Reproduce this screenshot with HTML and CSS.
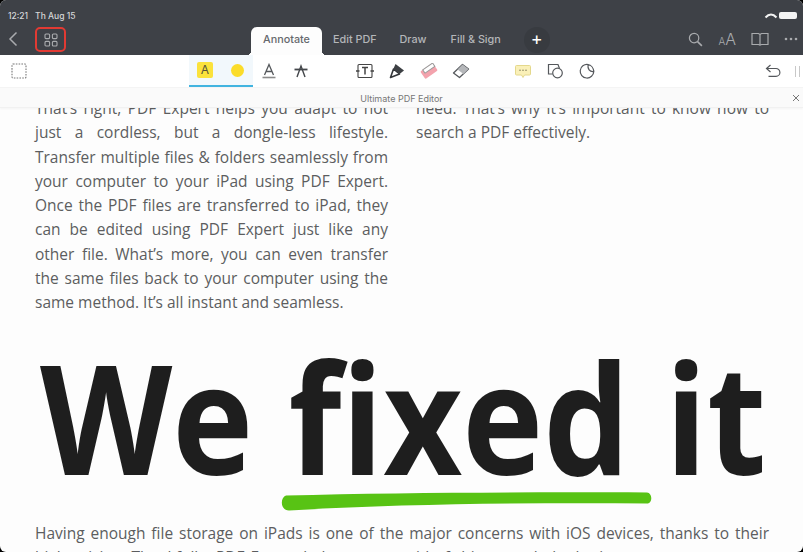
FILE: index.html
```html
<!DOCTYPE html>
<html lang="en">
<head>
  <meta charset="UTF-8" />
  <meta name="viewport" content="width=device-width, initial-scale=1.0" />
  <title>Ultimate PDF Editor</title>
  <link rel="stylesheet" href="styles.css">
</head>
<body>
  <div class="app">
    <header class="topbar">
      <div class="status">
        <span class="time">12:21</span>
        <span class="date">Th Aug 15</span>
        <svg class="wifi" width="14" height="8" viewBox="0 0 14 8"><path d="M1.5 5.5C5 1.6 9 1.6 12.5 5.5" fill="none" stroke="#f2f2f2" stroke-width="2"/></svg>
        <span class="battery"></span>
      </div>
      <nav class="nav">
        <svg class="back" width="10" height="16" viewBox="0 0 10 16"><path d="M8.5 1.5 2 8l6.5 6.5" fill="none" stroke="#a9abae" stroke-width="1.5"/></svg>
        <span class="docs-btn">
          <svg width="14" height="14" viewBox="0 0 14 14" fill="none" stroke="#a9abae" stroke-width="1.1"><rect x="1" y="1" width="4.6" height="4.6" rx="1"/><rect x="8.4" y="1" width="4.6" height="4.6" rx="1"/><rect x="1" y="8.4" width="4.6" height="4.6" rx="1"/><rect x="8.4" y="8.4" width="4.6" height="4.6" rx="1"/></svg>
        </span>
        <div class="tabs">
          <span class="tab active">Annotate</span>
          <span class="tab edit">Edit PDF</span>
          <span class="tab draw">Draw</span>
          <span class="tab fill">Fill &amp; Sign</span>
        </div>
        <span class="plus">+</span>
        <div class="nav-right">
          <svg width="15" height="15" viewBox="0 0 16 16" fill="none" stroke="#a9abae" stroke-width="1.3"><circle cx="6.500" cy="6.500" r="5"/><path d="m10.200 10.200 4.600 4.600" stroke-width="1.700"/></svg>
          <span class="font-size"><small>A</small>A</span>
          <svg width="18" height="14" viewBox="0 0 18 14" fill="none" stroke="#a9abae" stroke-width="1.200"><path d="M1 1.500h6.500L9 2.500l1.500-1H17v11h-6.500L9 13.200l-1.500-.7H1zM9 2.500v10.700"/></svg>
          <svg width="14" height="4" viewBox="0 0 14 4" fill="#a9abae"><circle cx="2" cy="2" r="1.300"/><circle cx="7" cy="2" r="1.300"/><circle cx="12" cy="2" r="1.300"/></svg>
        </div>
      </nav>
    </header>

    <div class="toolbar">
      <span class="tool select">
        <svg width="16" height="16" viewBox="0 0 16 16"><rect x="1" y="1" width="14" height="14" rx="1" fill="none" stroke="#777" stroke-width="1.100" stroke-dasharray="1.600 1.200"/></svg>
      </span>
      <div class="tool-group highlight">
        <span class="tool"><span class="marker-a">A</span></span>
        <span class="tool"><span class="dot"></span></span>
      </div>
      <div class="tool-group">
        <span class="tool">
          <svg width="16" height="16" viewBox="0 0 16 16" fill="none" stroke="#55585c" stroke-width="1.300"><path d="M3.500 12 8 1.500 12.500 12M5.200 8.500h5.600"/><path d="M1.500 14.500h13" stroke-width="1.600" stroke="#8a8a8a"/></svg>
        </span>
        <span class="tool">
          <svg width="16" height="14" viewBox="0 0 16 14" fill="none" stroke="#44474b" stroke-width="1.400"><path d="M4 13 8 2l4 11"/><path d="M1.500 5.500h13" stroke-width="1.800"/></svg>
        </span>
      </div>
      <div class="tool-group tools-mid">
        <span class="tool">
          <svg width="18" height="16" viewBox="0 0 18 16" fill="none" stroke="#444" stroke-width="1.100"><path d="M3 1.500h12a1 1 0 0 1 1 1v11a1 1 0 0 1-1 1H3a1 1 0 0 1-1-1v-11a1 1 0 0 1 1-1z"/><path d="M6 4.500h6M9 4.500v7" stroke-width="1.500"/><path d="M0 8h3.500M14.500 8H18" stroke-width="1.300"/></svg>
        </span>
        <span class="tool">
          <svg width="16" height="16" viewBox="0 0 16 16"><path d="M1.500 14.500 4.500 6 10.500 11z" fill="#fff" stroke="#33363a" stroke-width="1.600" stroke-linejoin="round"/><path d="M4.500 5.500 6.500 1 15 7.500 10.500 11z" fill="#3d4044"/></svg>
        </span>
        <span class="tool">
          <svg width="18" height="16" viewBox="0 0 18 16"><g transform="rotate(-35 9 8)"><rect x="1.500" y="3.500" width="15" height="9" rx="1" fill="#f3a3ad"/><rect x="4.500" y="3.500" width="12" height="4" fill="#fff" stroke="#9a9a9a"/></g></svg>
        </span>
        <span class="tool">
          <svg width="18" height="16" viewBox="0 0 18 16"><path d="M1.500 10 10.500 1.500l6 4.500-9 8.500z" fill="#fff" stroke="#55585c" stroke-width="1.300" stroke-linejoin="round"/><path d="M5.500 6.500 10.500 1.500l6 4.500-5 5z" fill="#b5b7ba"/></svg>
        </span>
      </div>
      <div class="tool-group tools-note">
        <span class="tool">
          <svg width="16" height="13" viewBox="0 0 16 13"><path d="M1.500 .5h13a1 1 0 0 1 1 1v7.500a1 1 0 0 1-1 1H9.500L8 12.500 6.500 10h-5a1 1 0 0 1-1-1V1.500a1 1 0 0 1 1-1z" fill="#faf0b8" stroke="#e4d88c"/><g fill="#8a8460"><circle cx="5" cy="5.200" r=".8"/><circle cx="8" cy="5.200" r=".8"/><circle cx="11" cy="5.200" r=".8"/></g></svg>
        </span>
        <span class="tool">
          <svg width="17" height="16" viewBox="0 0 17 16" fill="none" stroke="#55585c" stroke-width="1.200"><path d="M5.500 11H1.500V1.500H11l1.500 4"/><circle cx="10.500" cy="10" r="4.800" fill="#fff"/></svg>
        </span>
        <span class="tool">
          <svg width="16" height="16" viewBox="0 0 16 16" fill="none" stroke="#55585c" stroke-width="1.200"><path d="M9 1.500A6.800 6.800 0 1 0 14.800 8.500C10.500 9 8.500 6 9 1.500zM9 1.500c3 .5 5.500 3.500 5.800 7"/></svg>
        </span>
      </div>
      <div class="tool-right">
        <svg width="16" height="14" viewBox="0 0 16 14" fill="none" stroke="#55585c" stroke-width="1.200"><path d="M5.500 1 1.500 4.500 5.500 8"/><path d="M1.500 4.500h9.500a3.600 3.600 0 0 1 0 7.800H3.500"/></svg>
        <span class="handle"></span>
      </div>
    </div>

    <div class="titlebar">
      <span>Ultimate PDF Editor</span>
      <svg class="close" width="8" height="8" viewBox="0 0 8 8"><path d="m1 1 6 6M7 1 1 7" stroke="#777" stroke-width="1"/></svg>
    </div>

    <main class="page">
      <div class="columns">
        <p>That’s right, PDF Expert helps you adapt to not just a cordless, but a dongle-less lifestyle. Transfer multiple files &amp; folders seamlessly from your computer to your iPad using PDF Expert. Once the PDF files are transferred to iPad, they can be edited using PDF Expert just like any other file. What’s more, you can even transfer the same files back to your computer using the same method. It’s all instant and seamless.</p>
        <p>need. That’s why it’s important to know how to search a PDF effectively.</p>
      </div>
      <h1>We fixed it</h1>
      <svg class="underline" width="374" height="20" viewBox="0 0 374 20"><path d="M6 4.500C120 1.500 250 1 367 1.500c5 .5 6 9 1 11C250 11.500 120 13 9 19.500c-9 0-9-13-3-15z" fill="#58c314"/></svg>
      <p class="lead">Having enough file storage on iPads is one of the major concerns with iOS devices, thanks to their high pricing. Thankfully, PDF Expert helps you get rid of this struggle by letting you compress your bulk PDF files.</p>
    </main>
  </div>
</body>
</html>
```

FILE: styles.css
```css
* {
  box-sizing: border-box;
}
html, body {
  margin: 0;
  height: 100%;
  background: #000;
}
.app {
  display: flex;
  flex-direction: column;
  width: 803px;
  height: 552px;
  overflow: hidden;
  border-radius: 6px;
  background: #fdfdfd;
  font-family: 'Inter', 'Liberation Sans', sans-serif;
}

/* dark bar on top */
.topbar {
  height: 55px;
  background: #3e4147;
  flex-shrink: 0;
}
.status {
  display: flex;
  align-items: center;
  height: 27px;
  padding: 4px 6px 0 8px;
  font-size: 8.5px;
  font-weight: 500;
  color: #d6d7d9;
}
.date {
  margin-left: 7px;
}
.wifi {
  margin-left: auto;
}
.battery {
  width: 18px;
  height: 7px;
  margin-left: 1px;
  border-radius: 2px;
  background: #f4f4f4;
}
.nav {
  display: flex;
  align-items: flex-start;
  height: 28px;
}
.back {
  margin: 4px 0 0 8px;
}
.docs-btn {
  display: flex;
  align-items: center;
  justify-content: center;
  width: 31px;
  height: 25px;
  margin-left: 17px;
  border: 2px solid #e23a33;
  border-radius: 5px;
}
.tabs {
  display: flex;
  margin-left: 185px;
}
.tab {
  height: 28px;
  line-height: 25px;
  font-size: 10.8px;
  font-weight: 500;
  color: #b4b6b9;
}
.tab.active {
  position: relative;
  width: 71px;
  text-align: center;
  border-radius: 6px 6px 0 0;
  background: #fdfdfd;
  color: #66696d;
}
.tab.active::before,
.tab.active::after {
  content: "";
  position: absolute;
  bottom: 0;
  width: 4px;
  height: 4px;
}
.tab.active::before {
  left: -4px;
  background: radial-gradient(circle at 0 0, #3e4147 4px, #fdfdfd 4px);
}
.tab.active::after {
  right: -4px;
  background: radial-gradient(circle at 100% 0, #3e4147 4px, #fdfdfd 4px);
}
.tab.edit {
  margin-left: 11px;
}
.tab.draw {
  margin-left: 23px;
}
.tab.fill {
  margin-left: 24px;
}
.plus {
  width: 26px;
  height: 26px;
  margin-left: 23px;
  border-radius: 50%;
  background: #383b40;
  color: #fff;
  font-size: 18px;
  line-height: 24px;
  text-align: center;
}
.nav-right {
  display: flex;
  align-items: center;
  height: 24px;
  margin-left: auto;
  padding-right: 5px;
  gap: 15px;
}
.font-size {
  font-size: 16px;
  color: #a9abae;
  font-weight: 300;
}
.font-size small {
  font-size: 10px;
}

/* annotate tools */
.toolbar {
  display: flex;
  align-items: stretch;
  height: 32px;
  flex-shrink: 0;
  padding-left: 3px;
  background: #fff;
}
.tool {
  display: flex;
  align-items: center;
  justify-content: center;
  width: 32px;
  height: 32px;
}
.tool-group {
  display: flex;
}
.highlight {
  margin-left: 154px;
  background: #f2f8fc;
  border-bottom: 2px solid #41b4e0;
}
.highlight .tool {
  height: 30px;
}
.tools-mid {
  margin-left: 32px;
}
.tools-note {
  margin-left: 30px;
}
.marker-a {
  width: 16px;
  height: 16px;
  border-radius: 2px;
  background: #fbe23c;
  color: #55523a;
  font-size: 12px;
  line-height: 16px;
  text-align: center;
}
.dot {
  width: 13px;
  height: 13px;
  border-radius: 50%;
  background: #fbdc2a;
}
.tool-right {
  display: flex;
  align-items: center;
  margin-left: auto;
  padding-right: 3px;
  gap: 14px;
}
.handle {
  width: 5px;
  height: 11px;
  border-left: 1px solid #c8c8c8;
  border-right: 1px solid #c8c8c8;
}

.titlebar {
  position: relative;
  flex-shrink: 0;
  height: 21px;
  line-height: 22px;
  background: #fafafa;
  border-top: 1px solid #f4f4f4;
  border-bottom: 1px solid #f1f1f1;
  box-shadow: 0 1px 2px rgba(0, 0, 0, 0.04);
  color: #777;
  font-size: 9px;
  text-align: center;
}
.close {
  position: absolute;
  right: 3px;
  top: 6px;
}

/* pdf page */
.page {
  flex: 1;
  overflow: hidden;
  padding: 0 34px 0 35px;
  color: #5c5d5f;
  font-family: 'Open Sans', 'Liberation Sans', sans-serif;
  font-size: 15.5px;
  line-height: 24.3px;
}
.page p {
  margin: 0;
}
.columns {
  display: grid;
  grid-template-columns: 353px 353px;
  gap: 28px;
  margin-top: -12px;
  text-align: justify;
}
/* the heading in the pdf is a narrower cut than Open Sans */
h1 {
  width: 723px;
  margin: 26px 0 0 5px;
  font-size: 152px;
  font-weight: 700;
  line-height: 1;
  color: #1e1e1e;
  white-space: nowrap;
  transform: scaleX(0.9);
  transform-origin: left;
}
.underline {
  display: block;
  margin: -2px 0 0 245px;
}
.page .lead {
  margin-top: 10px;
  text-align: justify;
}
```
